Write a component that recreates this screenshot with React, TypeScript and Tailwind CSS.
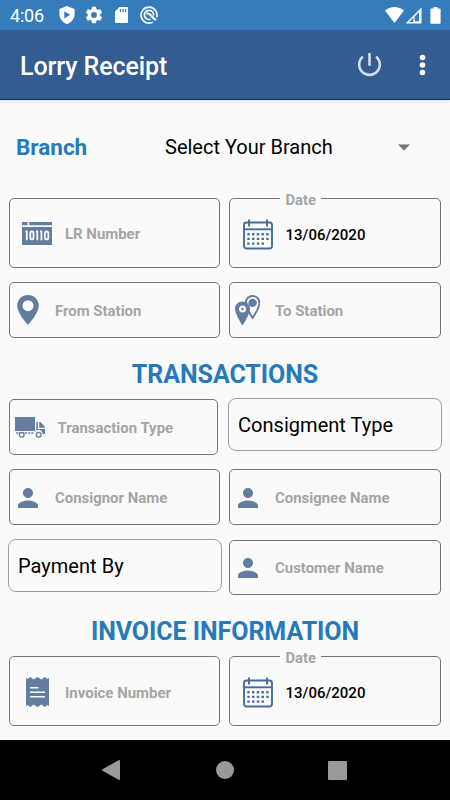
import type { ReactNode } from "react";
import clsx from "clsx";

function StatusBar() {
  return (
    <div className="flex h-[30px] shrink-0 items-center bg-[#357dba] pl-[10px] pr-[9px] text-white">
      <span className="w-[49px] pt-px text-[18px] leading-[30px] tracking-[-0.2px]">4:06</span>
      <svg className="h-[18px] w-[16px]" viewBox="0 0 16 18" fill="currentColor">
        <path d="M8 0 .4 3v5.2C.4 12.600 3.600 16.600 8 18c4.400-1.400 7.600-5.400 7.600-9.800V3zM5.300 5.200 11.200 8.800 5.300 12.400z" />
      </svg>
      <svg className="ml-[9px] h-[20px] w-[20px]" viewBox="0 0 24 24" fill="currentColor">
        <path d="M19.430 12.980c.04-.32.07-.64.07-.98s-.03-.66-.07-.98l2.110-1.650c.19-.15.24-.42.12-.64l-2-3.460c-.12-.22-.39-.3-.61-.22l-2.490 1c-.52-.4-1.080-.73-1.690-.98l-.38-2.650C14.460 2.180 14.250 2 14 2h-4c-.25 0-.46.18-.49.42l-.38 2.650c-.61.25-1.170.59-1.690.98l-2.490-1c-.23-.09-.49 0-.61.22l-2 3.460c-.13.22-.07.49.12.64l2.110 1.650c-.04.32-.07.65-.07.98s.03.66.07.98l-2.110 1.650c-.19.15-.24.42-.12.64l2 3.460c.12.22.39.3.61.22l2.490-1c.52.4 1.080.73 1.690.98l.38 2.650c.03.24.24.42.49.42h4c.25 0 .46-.18.49-.42l.38-2.650c.61-.25 1.170-.59 1.690-.98l2.490 1c.23.09.49 0 .61-.22l2-3.460c.12-.22.07-.49-.12-.64zM12 15.500a3.500 3.500 0 1 1 0-7 3.500 3.500 0 0 1 0 7z" />
      </svg>
      <svg className="ml-[11px] h-[16px] w-[13px]" viewBox="0 0 13 16">
        <path d="M4.500 0H12q1 0 1 1v14q0 1-1 1H1q-1 0-1-1V4.500z" fill="currentColor" />
        <path d="M5.500 2v3M8 2v3M10.500 2v3" stroke="#357dba" strokeWidth="1.2" />
      </svg>
      <svg className="ml-[12px] h-[18px] w-[18px]" viewBox="0 0 18 18" fill="none" stroke="currentColor">
        <path d="M12.900 16.100A8 8 0 1 1 16.700 11.300" strokeWidth="1.600" />
        <path d="M10.500 13.300A4.600 4.600 0 1 1 13.600 9.500" strokeWidth="1.600" />
        <path d="M6.500 7.300 9.300 8l6.500 6.200" strokeWidth="2" />
      </svg>
      <svg className="ml-auto h-[16px] w-[19px]" viewBox="0 0 19 16" fill="currentColor">
        <path d="M0 3.600C5.200-1.100 13.800-1.100 19 3.600L9.500 16z" />
      </svg>
      <svg className="ml-[1px] h-[17px] w-[17px]" viewBox="0 0 17 17">
        <path d="M2.300 15.700H15.800V2.200z" fill="none" stroke="currentColor" strokeWidth="1.400" />
        <path d="M9 9v6.500M8.500 15h7M14.700 4v12" stroke="currentColor" strokeWidth="1.300" />
      </svg>
      <svg className="ml-[8px] h-[17px] w-[11px]" viewBox="0 0 11 17" fill="currentColor">
        <path d="M3.300 0h4.400v1.600H10q.6 0 .6.600v13.900q0 .7-.6.700H1q-.6 0-.6-.7V2.200q0-.6.6-.6h2.300z" />
      </svg>
    </div>
  );
}

function AppBar() {
  return (
    <header className="flex h-[70px] shrink-0 items-center border-b border-[#06316f] bg-[#335c90] pl-[20px] pr-[18px] text-white shadow-[0_2px_4px_rgba(0,0,0,0.08)]">
      <h1 className="pt-[4px] text-[25px] font-medium leading-[30px] tracking-[-0.08px]">Lorry Receipt</h1>
      <svg className="ml-auto h-[31px] w-[31px] text-[#d5deea]" viewBox="0 0 24 24" fill="currentColor">
        <path d="M13 3h-2v10h2V3zm4.830 2.170-1.420 1.420C17.990 7.860 19 9.810 19 12c0 3.870-3.130 7-7 7s-7-3.130-7-7c0-2.190 1.010-4.140 2.580-5.420L6.170 5.170C4.230 6.820 3 9.260 3 12c0 4.970 4.030 9 9 9s9-4.030 9-9c0-2.740-1.230-5.180-3.170-6.830z" />
      </svg>
      <svg className="ml-[27px] h-[24px] w-[20px]" viewBox="0 0 20 24" fill="currentColor">
        <circle cx="10.500" cy="4.500" r="2.800" />
        <circle cx="10.500" cy="12" r="2.800" />
        <circle cx="10.500" cy="19.500" r="2.800" />
      </svg>
    </header>
  );
}

function BarcodeIcon() {
  return (
    <svg className="h-[23px] w-[30px]" viewBox="0 0 30 23">
      <path d="M0 0h5.500v3.200H0zM7.200 0H30v3.200H7.200zM0 5h30v18H0z" fill="currentColor" />
      <g fill="none" stroke="#fafafa" strokeWidth="1.800">
        <path d="M3.500 9.300h1.300v8.900M14 9.300h1.300v8.900M18.100 9.300h1.300v8.900" />
        <rect x="8.300" y="9.500" width="3.200" height="7.900" rx="1.600" />
        <rect x="22.900" y="9.500" width="3.400" height="7.900" rx="1.700" />
      </g>
    </svg>
  );
}

function CalendarIcon() {
  return (
    <svg className="h-[31px] w-[30px]" viewBox="0 0 30 31" fill="none" stroke="#476d9b">
      <rect x="1" y="3.500" width="28" height="26" rx="2.500" strokeWidth="1.900" />
      <path d="M1 10.300h28" strokeWidth="1.900" />
      <path d="M6 .5v7M24 .5v7" strokeWidth="1.900" />
      <path
        d="M9 15.200h17.500M4.300 19.900h22.200M4.300 24.600h17.500"
        strokeWidth="2.400"
        strokeDasharray="2.400 2.350"
      />
      <path d="M4.300 15.200h2.400" strokeWidth="2.400" />
    </svg>
  );
}

function PinIcon() {
  return (
    <svg className="h-[30px] w-[22px]" viewBox="0 0 22 30" fill="currentColor">
      <path
        fillRule="evenodd"
        d="M11 0C4.900 0 .2 4.700.2 10.600.2 18.500 11 30 11 30s10.800-11.500 10.800-19.400C21.800 4.700 17.100 0 11 0zm0 5.200a5.500 5.500 0 1 1 0 11 5.500 5.500 0 0 1 0-11z"
      />
    </svg>
  );
}

function TwoPinsIcon() {
  return (
    <svg className="h-[31px] w-[25px]" viewBox="0 0 25 31">
      <path
        d="M17.600 1c-3.900 0-6.800 3-6.800 6.700 0 5 6.800 15.200 6.800 15.200s6.800-10.200 6.800-15.200C24.400 4 21.500 1 17.600 1z"
        fill="#fafafa"
        stroke="currentColor"
        strokeWidth="1.900"
      />
      <circle cx="17.600" cy="7.900" r="4.200" fill="currentColor" />
      <path
        d="M7.500 6.500C3.200 6.500 0 9.700 0 13.700 0 19.200 7.500 30.500 7.500 30.500S15 19.200 15 13.700c0-4-3.200-7.200-7.500-7.200z"
        fill="currentColor"
      />
      <circle cx="7.500" cy="13.900" r="3.500" fill="#fafafa" />
      <circle cx="7.500" cy="13.900" r="1.200" fill="currentColor" />
    </svg>
  );
}

function TruckIcon() {
  return (
    <svg className="h-[21px] w-[30px]" viewBox="0 0 30 21" fill="currentColor">
      <path d="M0 0h20v14H0zM21.300 4.700h1.500v7.300H30v5h-2.500a4 4 0 0 0-7.500-2v-1h1.300zM24.200 4.900h1.300l4.500 5.200v.6h-5.800z" />
      <path d="M1.200 15.300h2.200v1.500H1.200zM10 15.300h2v1.500h-2zM13.200 15.300h2v1.500h-2zM16.400 15.300h2v1.500h-2z" />
      <g fill="#fafafa" stroke="currentColor" strokeWidth="1.300">
        <circle cx="6.700" cy="17.700" r="2.400" />
        <circle cx="23.700" cy="17.700" r="2.400" />
      </g>
      <path d="M3.800 15.300h5.600v.9H3.800z" />
    </svg>
  );
}

function PersonIcon() {
  return (
    <svg className="h-[20px] w-[20px]" viewBox="4 4 16 16" fill="currentColor">
      <path d="M12 12c2.210 0 4-1.790 4-4s-1.790-4-4-4-4 1.790-4 4 1.790 4 4 4zm0 2c-2.670 0-8 1.340-8 4v2h16v-2c0-2.660-5.330-4-8-4z" />
    </svg>
  );
}

function InvoiceIcon() {
  return (
    <svg className="h-[30px] w-[23px]" viewBox="0 0 23 30">
      <path
        d="M0 .8 1.500 2 4.200 0 7.500 2.500 11.500 0 15.500 2.500 18.800 0 21.500 2 23 .8v28.400L21.500 28l-2.700 2-3.300-2.500-4 2.500-4-2.500L4.200 30 1.500 28 0 29.200z"
        fill="currentColor"
      />
      <path d="M4 10.700h8.500M4 15.200h15M4 19.800h15" stroke="#fafafa" strokeWidth="1.400" />
    </svg>
  );
}

interface FieldProps {
  icon: ReactNode;
  label: string;
  className?: string;
}

function Field({ icon, label, className = "" }: FieldProps) {
  return (
    <div
      className={clsx(
        "flex items-center rounded-[5px] border border-[#747474] text-[#637c9f]",
        className,
      )}
    >
      {icon}
      <span className="whitespace-nowrap pt-px text-[14.950px] font-bold leading-5 text-[#a5a5a5]">{label}</span>
    </div>
  );
}

function DateField() {
  return (
    <div className="relative flex h-[70px] w-[212px] items-center gap-[12.500px] rounded-[5px] border border-[#747474] pl-[13px] pt-[2px]">
      {/* Floating label cuts through the outline */}
      <span className="absolute -top-[9px] left-[50px] bg-[#fafafa] pl-[5.500px] pr-[5px] text-[14.800px] font-bold leading-5 text-[#a5a5a5]">
        Date
      </span>
      <CalendarIcon />
      <span className="pt-px text-[15px] font-medium leading-5 text-black">13/06/2020</span>
    </div>
  );
}

function Spinner({ label }: { label: string }) {
  return (
    <div className="flex h-[53px] w-[214px] items-center rounded-[8px] border border-[#9f9f9f] pl-[9px] text-[20px] leading-6 tracking-[0.03px] text-black">
      {label}
    </div>
  );
}

function SectionTitle({ children }: { children: ReactNode }) {
  return (
    <h2 className="text-center text-[25px] font-bold leading-[30px] tracking-[-0.06px] text-[#267ab9]">{children}</h2>
  );
}

function NavBar() {
  return (
    <nav className="flex h-[60px] shrink-0 items-center bg-black pl-[102px] text-[#999]">
      <svg className="h-[20px] w-[18px]" viewBox="0 0 18 20" fill="currentColor">
        <path d="M17 0q1 0 1 1v18q0 1-1 1L.5 10.800q-1-.8 0-1.600z" />
      </svg>
      <div className="ml-[96px] h-[18px] w-[18px] rounded-full bg-[#999]" />
      <div className="ml-[94px] h-[19px] w-[19px] rounded-[1px] bg-[#999]" />
    </nav>
  );
}

export default function App() {
  return (
    <div className="flex h-[800px] w-[450px] flex-col overflow-hidden bg-[#fafafa] font-[Roboto,sans-serif]">
      <StatusBar />
      <AppBar />

      <main className="flex h-[640px] shrink-0 flex-col">
        <div className="flex h-[98px] items-center pb-[4px] pl-[16px] text-black">
          <span className="w-[149px] text-[22.500px] font-bold leading-7 text-[#267ab9]">Branch</span>
          <span className="text-[20px] leading-6">Select Your Branch</span>
          <svg className="ml-auto mr-[40px] h-[7px] w-[12px]" viewBox="0 0 12 7" fill="#737373">
            <path d="M0 .5h12l-6 6z" />
          </svg>
        </div>

        <div className="flex h-[70px] gap-[9px] pl-[9px]">
          <Field className="h-[70px] w-[211px] gap-[13px] pl-[12px] pt-[1px]" icon={<BarcodeIcon />} label="LR Number" />
          <DateField />
        </div>
        <div className="mt-[14px] flex h-[56px] gap-[9px] pl-[9px]">
          <Field className="w-[211px] gap-[16px] pl-[7px]" icon={<PinIcon />} label="From Station" />
          <Field className="w-[212px] gap-[15px] pl-[5px] pt-px" icon={<TwoPinsIcon />} label="To Station" />
        </div>

        <div className="flex h-[60px] items-center justify-center pt-[14px]">
          <SectionTitle>TRANSACTIONS</SectionTitle>
        </div>

        <div className="flex h-[57px] items-start gap-[10px] pl-[9px]">
          <Field className="mt-[1px] h-[56px] w-[209px] gap-[12.500px] pl-[5px]" icon={<TruckIcon />} label="Transaction Type" />
          <Spinner label="Consigment Type" />
        </div>
        <div className="mt-[14px] flex h-[56px] gap-[9px] pl-[9px]">
          <Field className="w-[211px] gap-[17px] pl-[8px] pt-px" icon={<PersonIcon />} label="Consignor Name" />
          <Field className="w-[212px] gap-[17px] pl-[8px] pt-px" icon={<PersonIcon />} label="Consignee Name" />
        </div>
        <div className="mt-[14px] flex h-[57px] items-start gap-[7px] pl-[8px]">
          <Spinner label="Payment By" />
          <Field className="mt-[1px] h-[55px] w-[212px] gap-[17px] pl-[8px]" icon={<PersonIcon />} label="Customer Name" />
        </div>

        <div className="flex h-[60px] items-center justify-center pt-[12px]">
          <SectionTitle>INVOICE INFORMATION</SectionTitle>
        </div>

        <div className="flex h-[70px] gap-[9px] pl-[9px]">
          <Field className="h-[70px] w-[211px] gap-[16px] pl-[16px] pt-[2px]" icon={<InvoiceIcon />} label="Invoice Number" />
          <DateField />
        </div>
      </main>

      <NavBar />
    </div>
  );
}
